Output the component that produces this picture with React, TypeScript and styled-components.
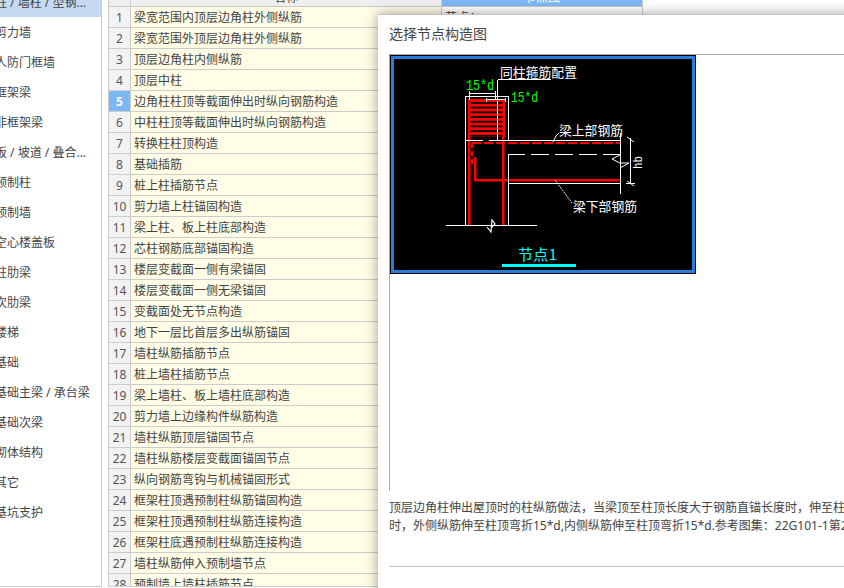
import React from 'react';
import styled, { createGlobalStyle } from 'styled-components';

const GlobalStyle = createGlobalStyle`
  html, body {
    margin: 0;
    height: 588px;
    overflow: hidden;
    background: #fff;
  }
  body {
    font-family: "Noto Sans", "Noto Sans CJK SC", sans-serif;
    font-size: 12px;
    color: #444;
  }
`;

const Page = styled.div`
  position: relative;
  display: flex;
  align-items: flex-start;
  width: 844px;
  height: 588px;
  overflow: hidden;
`;

const Sidebar = styled.div`
  flex: none;
  width: 102px;
  height: 587px;
  box-sizing: border-box;
  border-right: 1px solid #ccc;
  border-bottom: 1px solid #ccc;
  overflow: hidden;
`;

const SideList = styled.div`
  margin: -13px 0 0 -5px;
`;

const SideItem = styled.div<{ $active?: boolean }>`
  height: 30px;
  line-height: 32px;
  padding-right: 8px;
  white-space: nowrap;
  overflow: hidden;
  text-overflow: ellipsis;
  background: ${(p) => (p.$active ? '#c5daf2' : 'transparent')};
`;

const Table = styled.div`
  flex: none;
  margin-left: 6px;
  width: 535px;
  height: 587px;
  box-sizing: border-box;
  border-left: 1px solid #ccc;
  border-bottom: 1px solid #ccc;
  overflow: hidden;
`;

const Columns = '22px 311px 201px';

const HeadRow = styled.div`
  display: grid;
  grid-template-columns: ${Columns};
  height: 7px;
  box-sizing: border-box;
  border-bottom: 1px solid #c8c8c8;
  overflow: hidden;
`;

const HeadCell = styled.div<{ $active?: boolean }>`
  height: 6px;
  box-sizing: border-box;
  border-right: 1px solid #ccc;
  background: ${(p) => (p.$active ? '#7cb8f4' : '#efefef')};
  color: ${(p) => (p.$active ? '#fff' : '#444')};
  text-align: center;
  line-height: 14px;
  overflow: hidden;

  span {
    display: block;
    margin-top: -9px;
  }
`;

const Row = styled.div`
  display: grid;
  grid-template-columns: ${Columns};
  grid-template-rows: 20px;
  height: 21px;
  box-sizing: border-box;
  border-bottom: 1px solid #ccc;
`;

const NumCell = styled.div<{ $active?: boolean }>`
  height: 20px;
  box-sizing: border-box;
  border-right: 1px solid #ccc;
  background: ${(p) => (p.$active ? '#7cb8f4' : '#f2f2f2')};
  color: ${(p) => (p.$active ? '#fff' : '#555')};
  font-weight: ${(p) => (p.$active ? 700 : 400)};
  text-align: center;
  line-height: 21px;
  overflow: hidden;
`;

const NameCell = styled.div`
  height: 20px;
  box-sizing: border-box;
  border-right: 1px solid #ccc;
  background: #fffde6;
  padding-left: 3px;
  line-height: 22px;
  white-space: nowrap;
  overflow: hidden;
`;

const NodeCell = styled.div`
  height: 20px;
  box-sizing: border-box;
  border-right: 1px solid #ccc;
  background: #fff;
  padding-left: 3px;
  line-height: 22px;
  overflow: hidden;
`;

const Modal = styled.div`
  position: absolute;
  left: 378px;
  top: 14px;
  width: 700px;
  height: 640px;
  box-sizing: border-box;
  padding-left: 11px;
  background: #fff;
  border-top: 1px solid #c4c4c4;
  box-shadow: 0 0 12px rgba(0, 0, 0, 0.38);
`;

const ModalTitle = styled.div`
  height: 39px;
  line-height: 38px;
  font-size: 14px;
  color: #444;
`;

const Preview = styled.div`
  height: 437px;
  box-sizing: border-box;
  border-top: 1px solid #aaa;
  border-left: 1px solid #aaa;
`;

const ImageFrame = styled.div`
  width: 306px;
  height: 219px;
  box-sizing: border-box;
  border: 1px solid #000;
  background: #000;
`;

const ImageInner = styled.div`
  border: 3px solid #2b7ddb;
  background: #000;

  svg {
    display: block;
  }
`;

const Description = styled.p`
  margin: 8px 0 0;
  line-height: 18px;
  white-space: nowrap;
  color: #444;
`;

const Divider = styled.div`
  margin-top: 31px;
  height: 1px;
  background: #c4c4c4;
`;

const sideItems = [
  '柱 / 墙柱 / 型钢混凝土柱',
  '剪力墙',
  '人防门框墙',
  '框架梁',
  '非框架梁',
  '板 / 坡道 / 叠合板整浇层',
  '预制柱',
  '预制墙',
  '空心楼盖板',
  '柱肋梁',
  '次肋梁',
  '楼梯',
  '基础',
  '基础主梁 / 承台梁',
  '基础次梁',
  '砌体结构',
  '其它',
  '基坑支护',
];

const rows = [
  '梁宽范围内顶层边角柱外侧纵筋',
  '梁宽范围外顶层边角柱外侧纵筋',
  '顶层边角柱内侧纵筋',
  '顶层中柱',
  '边角柱柱顶等截面伸出时纵向钢筋构造',
  '中柱柱顶等截面伸出时纵向钢筋构造',
  '转换柱柱顶构造',
  '基础插筋',
  '桩上柱插筋节点',
  '剪力墙上柱锚固构造',
  '梁上柱、板上柱底部构造',
  '芯柱钢筋底部锚固构造',
  '楼层变截面一侧有梁锚固',
  '楼层变截面一侧无梁锚固',
  '变截面处无节点构造',
  '地下一层比首层多出纵筋锚固',
  '墙柱纵筋插筋节点',
  '桩上墙柱插筋节点',
  '梁上墙柱、板上墙柱底部构造',
  '剪力墙上边缘构件纵筋构造',
  '墙柱纵筋顶层锚固节点',
  '墙柱纵筋楼层变截面锚固节点',
  '纵向钢筋弯钩与机械锚固形式',
  '框架柱顶遇预制柱纵筋锚固构造',
  '框架柱顶遇预制柱纵筋连接构造',
  '框架柱底遇预制柱纵筋连接构造',
  '墙柱纵筋伸入预制墙节点',
  '预制墙上墙柱插筋节点',
];

const stripes = [102, 106.7, 111.4, 116.1, 120.8, 125.5, 130.2, 134.9];
const cjk = '"Noto Sans CJK SC", sans-serif';
const mono = '"Liberation Mono", monospace';

// the CAD drawing, in page coordinates
const NodeDrawing: React.FC = () => (
  <svg width="298" height="211" viewBox="394 59 298 211">
    <rect x="468" y="99" width="37" height="38" fill="#f00" />
    {stripes.map((y) => (
      <rect key={y} x="470.5" y={y} width="32" height="1.8" fill="#000" />
    ))}
    <g fill="#f00">
      <rect x="468" y="137" width="2.5" height="88" />
      <rect x="502" y="137" width="2.5" height="88" />
      <rect x="474" y="157" width="2.5" height="24" />
      <rect x="474" y="179" width="145" height="2.5" />
    </g>
    <path d="M472 143H620" stroke="#f00" strokeWidth="2" strokeDasharray="9 3" fill="none" />
    <path d="M472 143V164" stroke="#f00" strokeWidth="2" strokeDasharray="5 3" fill="none" />

    <g stroke="#fff" fill="none" shapeRendering="crispEdges">
      <path d="M497.5 79.5H551M497.5 79.5V140" />
      <path d="M465.5 225V96.5H508.5V140.5" />
      <path d="M465.5 140.5H483M489 140.5H620.5" />
      <path d="M508.5 225V154.5H525M531 154.5H549M555 154.5H573M579 154.5H597M603 154.5H620" />
      <path d="M508.5 183.5H620.5M620.5 133V194" />
      <path d="M469.5 93.5H495.5M469.5 91V100M495.5 91V100" />
      <path d="M486.5 99.5H505.5M486.5 98V102M505.5 98V102" />
      <path d="M630.5 138V184M626 183.5H635" />
      <path d="M446 225.5H537" />
    </g>
    <g stroke="#fff" fill="none">
      <path d="M627 137L634 142M627 181L634 186" />
      <path d="M620 155L612 159L620 163H629L620 168" />
      <path d="M553 142L556 136L559 133" />
      <path d="M555 180L572 203" strokeDasharray="2 1" />
      <path d="M487 227L491 232L492 220L495 224L491 228" strokeWidth="1.2" />
    </g>

    <g fill="#fff" fontFamily={cjk} fontSize="13">
      <text x="500" y="77" textLength="77" lengthAdjust="spacingAndGlyphs">同柱箍筋配置</text>
      <text x="559" y="134.5" textLength="64" lengthAdjust="spacingAndGlyphs">梁上部钢筋</text>
      <text x="573" y="211" textLength="64" lengthAdjust="spacingAndGlyphs">梁下部钢筋</text>
    </g>
    <g fill="#0f0" fontFamily={mono} fontSize="14">
      <text x="466" y="90" textLength="28" lengthAdjust="spacingAndGlyphs">15*d</text>
      <text x="511" y="102" textLength="27" lengthAdjust="spacingAndGlyphs">15*d</text>
    </g>
    <text
      transform="translate(642 169) rotate(-90)"
      fill="#fff"
      fontFamily={mono}
      fontSize="13"
      textLength="13"
      lengthAdjust="spacingAndGlyphs"
    >
      hb
    </text>
    <text x="518" y="260" fill="#0ff" fontFamily={cjk} fontSize="15" textLength="39" lengthAdjust="spacing">
      节点1
    </text>
    <rect x="502" y="264" width="74" height="3" fill="#0ff" />
  </svg>
);

const App: React.FC = () => {
  return (
    <Page>
      <GlobalStyle />
      <Sidebar>
        <SideList>
          {sideItems.map((item, i) => (
            <SideItem key={item} $active={i === 0}>
              {item}
            </SideItem>
          ))}
        </SideList>
      </Sidebar>

      <Table>
        <HeadRow>
          <HeadCell />
          <HeadCell>
            <span>名称</span>
          </HeadCell>
          <HeadCell $active>
            <span>节点图</span>
          </HeadCell>
        </HeadRow>
        {rows.map((name, i) => (
          <Row key={name}>
            <NumCell $active={i === 4}>{i + 1}</NumCell>
            <NameCell>{name}</NameCell>
            <NodeCell>{i === 0 ? '节点1' : ''}</NodeCell>
          </Row>
        ))}
      </Table>

      <Modal>
        <ModalTitle>选择节点构造图</ModalTitle>
        <Preview>
          <ImageFrame>
            <ImageInner>
              <NodeDrawing />
            </ImageInner>
          </ImageFrame>
        </Preview>
        <Description>
          顶层边角柱伸出屋顶时的柱纵筋做法，当梁顶至柱顶长度大于钢筋直锚长度时，伸至柱
          <br />
          时，外侧纵筋伸至柱顶弯折15*d,内侧纵筋伸至柱顶弯折15*d.参考图集：22G101-1第2
        </Description>
        <Divider />
      </Modal>
    </Page>
  );
};

export default App;
